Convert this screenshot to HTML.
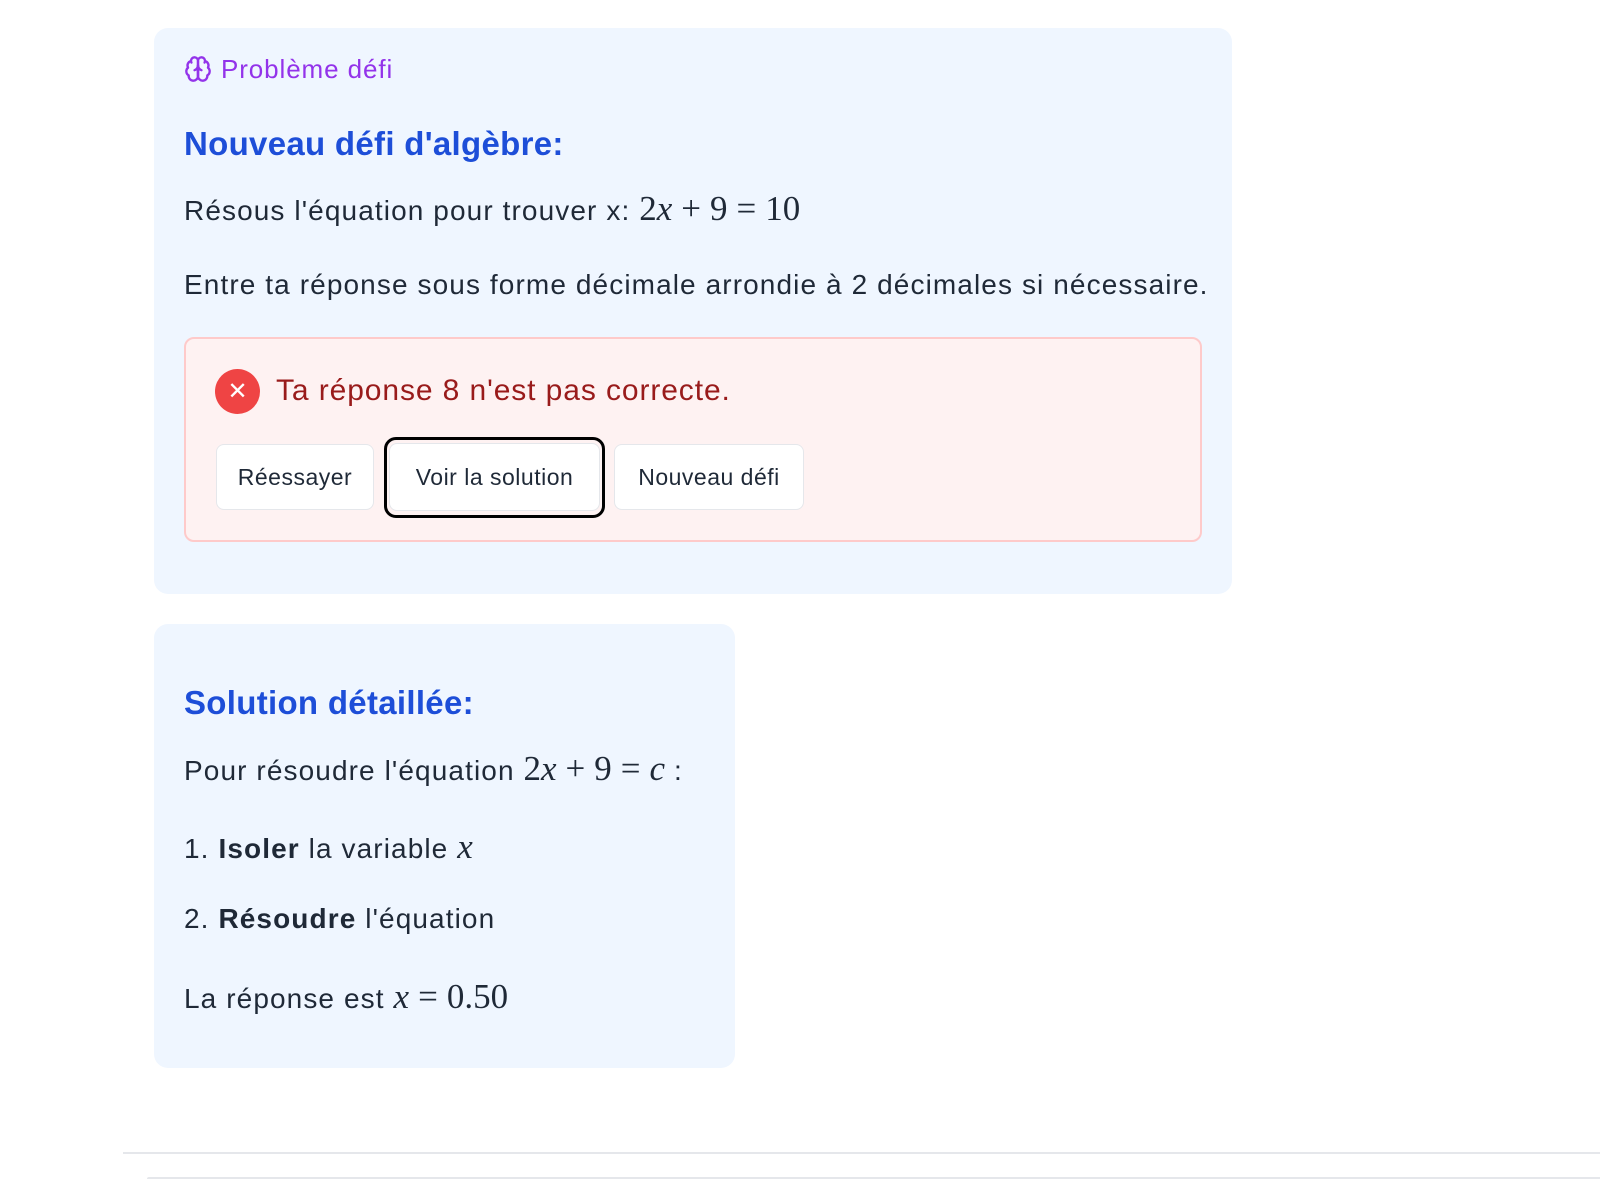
<!DOCTYPE html>
<html><head><meta charset="utf-8"><style>
*{margin:0;padding:0;box-sizing:border-box}
body{width:1600px;height:1181px;background:#fff;font-family:"Liberation Sans",sans-serif;color:#1f2937;position:relative;overflow:hidden}
.card{position:absolute;background:#eff6ff;border-radius:14px}
.t{position:absolute;white-space:nowrap;line-height:1}
.b{font-size:28px;letter-spacing:1.1px}
.m{font-family:"Liberation Serif",serif;font-size:35px;letter-spacing:0}
.m i{font-style:italic}
.o{margin:0 9px}
.btn{position:absolute;top:444px;height:66px;background:#fff;border:1.5px solid #e5e7eb;border-radius:8px;font-size:23px;letter-spacing:0.5px;color:#1f2937;display:flex;align-items:center;justify-content:center}
</style></head><body>
<div class="card" style="left:154px;top:28px;width:1078px;height:566px"></div>
<div class="card" style="left:154px;top:624px;width:581px;height:444px"></div>

<svg style="position:absolute;left:184px;top:55px" width="28" height="28" viewBox="0 0 24 24" fill="none" stroke="#9333ea" stroke-width="2" stroke-linecap="round" stroke-linejoin="round"><path d="M12 5a3 3 0 1 0-5.997.125 4 4 0 0 0-2.526 5.77 4 4 0 0 0 .556 6.588A4 4 0 1 0 12 18Z"/><path d="M12 5a3 3 0 1 1 5.997.125 4 4 0 0 1 2.526 5.77 4 4 0 0 1-.556 6.588A4 4 0 1 1 12 18Z"/><path d="M15 13a4.5 4.5 0 0 1-3-4 4.5 4.5 0 0 1-3 4"/><path d="M17.6 6.5a3 3 0 0 0 .4-1.4"/><path d="M6 5.1a3 3 0 0 0 .4 1.4"/><path d="M12 9v9"/></svg>
<div class="t" style="left:221px;top:56px;font-size:26px;letter-spacing:0.9px;color:#9333ea">Problème défi</div>
<div class="t" style="left:184px;top:127px;font-size:33px;letter-spacing:0.3px;font-weight:bold;color:#1d4ed8">Nouveau défi d'algèbre:</div>
<div class="t b" style="left:184px;top:191px">Résous l'équation pour trouver x: <span class="m">2<i>x</i><span class="o">+</span>9<span class="o">=</span>10</span></div>
<div class="t b" style="left:184px;top:271px">Entre ta réponse sous forme décimale arrondie à 2 décimales si nécessaire.</div>

<div style="position:absolute;left:184px;top:337px;width:1018px;height:205px;background:#fef2f2;border:2px solid #fecaca;border-radius:10px"></div>
<div style="position:absolute;left:215px;top:369px;width:45px;height:45px;border-radius:50%;background:#ef4444;color:#fff;font-size:24px;display:flex;align-items:center;justify-content:center">✕</div>
<div class="t" style="left:276px;top:376px;font-size:30px;letter-spacing:0.9px;color:#991b1b">Ta réponse 8 n'est pas correcte.</div>
<div class="btn" style="left:216px;width:158px">Réessayer</div>
<div style="position:absolute;left:384px;top:437px;width:221px;height:81px;border:3px solid #000;border-radius:12px"></div>
<div class="btn" style="left:389px;width:211px;top:443px;height:68px">Voir la solution</div>
<div class="btn" style="left:614px;width:190px">Nouveau défi</div>

<div class="t" style="left:184px;top:686px;font-size:33px;letter-spacing:0.3px;font-weight:bold;color:#1d4ed8">Solution détaillée:</div>
<div class="t b" style="left:184px;top:751px">Pour résoudre l'équation <span class="m">2<i>x</i><span class="o">+</span>9<span class="o">=</span><i>c</i></span> :</div>
<div class="t b" style="left:184px;top:829px">1. <b>Isoler</b> la variable <span class="m"><i>x</i></span></div>
<div class="t b" style="left:184px;top:905px">2. <b>Résoudre</b> l'équation</div>
<div class="t b" style="left:184px;top:979px">La réponse est <span class="m"><i>x</i><span class="o">=</span>0.50</span></div>

<div style="position:absolute;left:123px;top:1152px;width:1477px;height:2px;background:#e5e7eb"></div>
<div style="position:absolute;left:147px;top:1177px;width:1453px;height:2px;background:#e5e7eb;border-top-left-radius:6px"></div>
</body></html>
